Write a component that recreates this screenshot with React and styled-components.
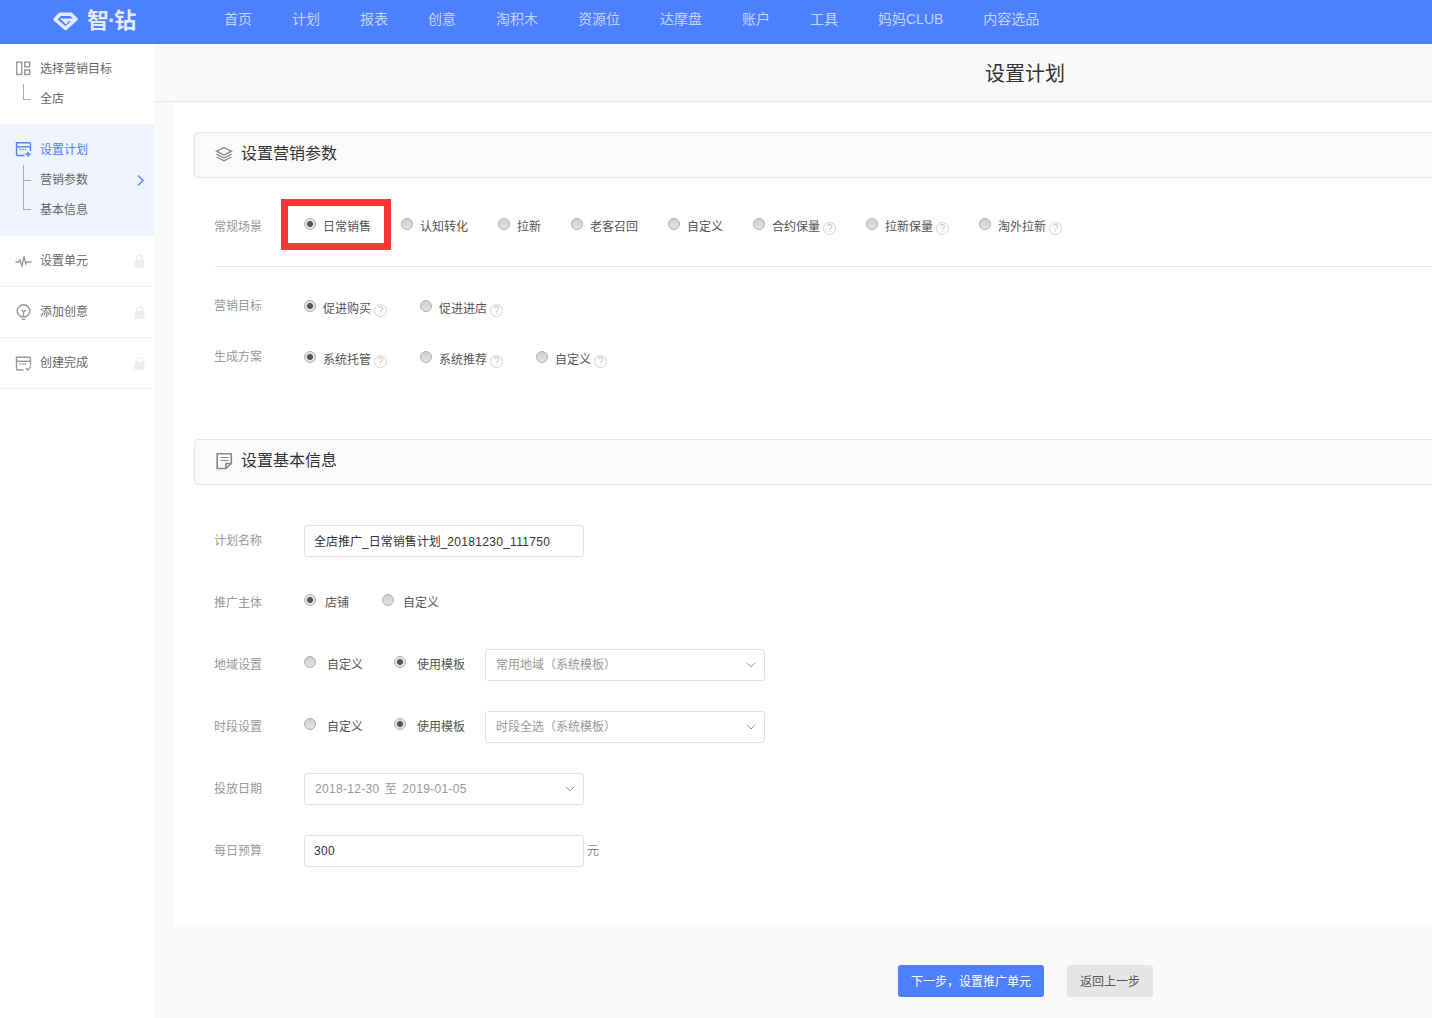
import React from 'react'
import styled, { createGlobalStyle } from 'styled-components'

const Global = createGlobalStyle`
  html, body {
    margin: 0;
    padding: 0;
    overflow: hidden;
    background: #f9f9f9;
    font-family: "Liberation Sans", "Noto Sans CJK SC", sans-serif;
    font-size: 12px;
    color: #333;
  }
  * { box-sizing: border-box; }
`

const Page = styled.div`
  width: 1432px;
  height: 1018px;
  overflow: hidden;
  display: flex;
  flex-direction: column;
`

const Header = styled.header`
  height: 44px;
  flex: none;
  display: flex;
  align-items: center;
  background: #4d80ff;
`

const Logo = styled.div`
  width: 224px;
  height: 44px;
  flex: none;
  display: flex;
  align-items: center;
  padding: 0 0 2px 53px;
  color: #e3ebff;
`

const LogoText = styled.span`
  margin-left: 9px;
  font-size: 22px;
  line-height: 38px;
  font-weight: 700;
  letter-spacing: -1px;
  white-space: nowrap;
`

const Nav = styled.nav`
  display: flex;
  gap: 40px;
  margin-top: -6px;
`

const NavItem = styled.a`
  font-size: 14px;
  line-height: 20px;
  color: rgba(255, 255, 255, 0.68);
  white-space: nowrap;
`

const Body = styled.div`
  flex: 1;
  display: flex;
  min-height: 0;
`

const Sidebar = styled.aside`
  width: 154px;
  flex: none;
  background: #fff;
`

const StepGroup = styled.div`
  padding: ${p => (p.$active ? '10px 0 12px' : '9px 0 11px')};
  background: ${p => (p.$active ? '#f0f4fe' : '#fff')};
`

const StepRow = styled.div`
  height: ${p => (p.$single ? '51px' : '30px')};
  display: flex;
  align-items: center;
  padding: 0 0 ${p => (p.$single ? '4px' : '2px')} 15px;
  color: ${p => (p.$active ? '#4d80ff' : '#666')};
  border-bottom: ${p => (p.$single ? '1px solid #f3f3f3' : 'none')};
  position: relative;
`

const StepIcon = styled.span`
  width: 17px;
  height: 17px;
  flex: none;
  margin: ${p => (p.$single ? '4px' : '3px')} 8px 0 0;
  display: flex;
  color: ${p => (p.$active ? '#4d80ff' : '#999')};
`

const SubRow = styled.div`
  height: 30px;
  display: flex;
  align-items: center;
  padding: 0 0 2px 40px;
  color: #666;
  position: relative;

  &::before {
    content: '';
    position: absolute;
    left: 23px;
    top: ${p => (p.$first ? '1px' : '-15px')};
    width: 7px;
    height: ${p => (p.$first ? '15px' : '30px')};
    border-left: 1px solid #aaa;
    border-bottom: 1px solid #aaa;
  }
`

const Arrow = styled.span`
  position: absolute;
  right: 9px;
  top: 10px;
  display: flex;
  color: #4d80ff;
`

const LockMark = styled.span`
  position: absolute;
  right: 9px;
  top: 19px;
  display: flex;
  color: #eeeeee;
`

const Main = styled.main`
  flex: 1;
  min-width: 0;
  display: flex;
  flex-direction: column;
  background: #f9f9f9;
`

const TitleBand = styled.div`
  height: 58px;
  flex: none;
  padding-left: 831px;
  font-size: 20px;
  line-height: 60px;
  color: #333;
  border-bottom: 1px solid #e6e6e6;
`

const Panel = styled.section`
  flex: 1;
  margin-left: 20px;
  padding: 30px 0 58px 20px;
  background: #fff;
`

const SectionHeader = styled.div`
  height: 46px;
  margin-right: -10px;
  margin-top: ${p => p.$top || 0}px;
  display: flex;
  align-items: center;
  padding: 0 0 2px 20px;
  background: #fafafa;
  border: 1px solid #e6e6e6;
  border-radius: 4px;
  font-size: 16px;
  color: #333;
`

const SectionIcon = styled.span`
  width: 18px;
  height: 18px;
  margin-right: 8px;
  display: flex;
  color: #888;
`

const SectionTitle = styled.span`
  margin-top: -4px;
`

const Form = styled.div`
  padding-left: 20px;
`

const OptionRow = styled.div`
  display: flex;
  align-items: flex-start;
  margin-top: ${p => p.$top}px;
`

const Label = styled.div`
  width: 90px;
  flex: none;
  line-height: 20px;
  margin-top: ${p => p.$shift || 0}px;
  color: #999;
`

const Options = styled.div`
  display: flex;
  gap: ${p => p.$gap || 30}px;
`

const Option = styled.label`
  display: flex;
  align-items: flex-start;
  padding-top: 1px;
  line-height: 20px;
  color: #555;
  white-space: nowrap;
  position: relative;
`

const Radio = styled.span`
  width: 12px;
  height: 12px;
  flex: none;
  margin: 1px ${p => p.$space || 7}px 0 0;
  border-radius: 50%;
  border: 1px solid #aeaeae;
  background: ${p =>
    p.$checked
      ? 'radial-gradient(circle, #555 0 2.6px, #e4e4e4 3.4px)'
      : 'linear-gradient(#cecece, #e4e4e4)'};
`

const Help = styled.span`
  width: 13px;
  height: 13px;
  margin: 5px 0 0 3px;
  border-radius: 50%;
  border: 1px solid #d2d2d2;
  color: #c4c4c4;
  font-size: 10px;
  line-height: 11px;
  text-align: center;
`

const Highlight = styled.span`
  position: absolute;
  left: -23px;
  top: -17px;
  width: 110px;
  height: 51px;
  border: 7px solid #ff3636;
`

const Divider = styled.div`
  height: 1px;
  margin-top: 29px;
  background: #e6e6e6;
`

const Field = styled.div`
  display: flex;
  align-items: center;
  height: 32px;
  margin-top: ${p => p.$top}px;
`

const FieldOptions = styled(Options)`
  align-self: flex-start;
  padding-top: 5px;
  margin-right: 20px;
`

const TextBox = styled.div`
  width: 280px;
  height: 32px;
  flex: none;
  display: flex;
  align-items: center;
  padding: 0 9px ${p => p.$lift || 0}px ${p => (p.$select ? '10px' : '9px')};
  border: 1px solid #e1e1e1;
  border-radius: 3px;
  background: #fff;
  color: ${p => (p.$select ? '#999' : '#333')};
  letter-spacing: ${p => p.$spacing || 0};
  white-space: pre;
  position: relative;
`

const Digits = styled.span`
  letter-spacing: 0.3px;
`

const DateText = styled.span`
  word-spacing: -1px;
`

const Caret = styled.span`
  position: absolute;
  right: 8px;
  top: 12px;
  display: flex;
`

const Unit = styled.span`
  margin: 0 0 4px 3px;
  color: #888;
`

const Footer = styled.footer`
  height: 93px;
  flex: none;
  display: flex;
  align-items: flex-start;
  gap: 23px;
  padding: 40px 0 0 744px;
`

const Button = styled.button`
  height: 32px;
  width: ${p => p.$width}px;
  padding: 0 0 2px;
  border: none;
  border-radius: 3px;
  font: inherit;
  background: ${p => (p.$primary ? '#4d80ff' : '#e5e5e5')};
  color: ${p => (p.$primary ? '#fff' : '#555')};
`

const Svg = ({ size = 17, children }) => (
  <svg width={size} height={size} viewBox="0 0 17 17" fill="none" stroke="currentColor" strokeWidth="1.4">
    {children}
  </svg>
)

const GoalIcon = () => (
  <Svg>
    <rect x="1.700" y="2.200" width="5" height="12.300" />
    <rect x="9.700" y="2.200" width="5" height="4.600" />
    <rect x="9.700" y="9.900" width="5" height="4.600" />
  </Svg>
)

const PlanIcon = () => (
  <Svg>
    <path d="M9.500 14.500H2.700a1.200 1.200 0 0 1-1.200-1.200V1.800h12.800a1.200 1.200 0 0 1 1.200 1.200v7" />
    <path d="M1.500 5.800h14.500" />
    <path d="M4.500 8.500h7" strokeDasharray="1.400 1.200" />
    <path d="M13 10.800v5M10.500 13.300h5" />
  </Svg>
)

const PulseIcon = () => (
  <Svg>
    <path d="M0.500 9h3l1.500-2 2 6 2-10 1.800 8 1-2h4.700" strokeWidth="1.300" />
  </Svg>
)

const BulbIcon = () => (
  <Svg>
    <path d="M5.800 12.700C4 11.500 2.200 9.700 2.200 7.100a6.300 6.300 0 0 1 12.600 0c0 2.600-1.800 4.400-3.600 5.600z" />
    <path d="M8.500 12.500V7.500M6.400 6l2.100 2 2.100-2" />
    <path d="M6.800 15.300h3.400" />
  </Svg>
)

const DoneIcon = () => (
  <Svg>
    <path d="M8.500 15H2.700a1.200 1.200 0 0 1-1.200-1.200V2.300h12.800a1.200 1.200 0 0 1 1.200 1.200v7" />
    <path d="M1.500 6.300h14.500" />
    <path d="M4.500 9h7" strokeDasharray="1.400 1.200" />
    <path d="M10.800 13.200l1.900 1.800 3.200-3.400" />
  </Svg>
)

const LayersIcon = () => (
  <svg width="18" height="18" viewBox="0 0 18 18" fill="none" stroke="currentColor" strokeWidth="1.300">
    <path d="M9 2.500l7.500 3.700L9 10 1.500 6.200z" />
    <path d="M1.500 9.200L9 13l7.500-3.800" />
    <path d="M1.500 12L9 15.800l7.500-3.800" />
  </svg>
)

const NoteIcon = () => (
  <svg width="18" height="18" viewBox="0 0 18 18" fill="none" stroke="currentColor" strokeWidth="1.600">
    <path d="M11 16.500H2.200V1.700h14.100V11.500z" />
    <path d="M11 16.500v-5h5.300" />
    <path d="M5.500 5.500h8M5.500 8.500h8" strokeWidth="1.200" />
  </svg>
)

const LockIcon = () => (
  <svg width="11" height="13" viewBox="0 0 11 13">
    <path d="M2.500 5.500V3.500a3 3 0 0 1 6 0v2" fill="none" stroke="currentColor" strokeWidth="1.300" />
    <rect x="0.500" y="5" width="10" height="8" rx="1.200" fill="currentColor" />
  </svg>
)

const ChevronRight = () => (
  <svg width="9" height="13" viewBox="0 0 9 13" fill="none" stroke="currentColor" strokeWidth="1.300">
    <path d="M2 1.500L7 6.500 2 11.500" />
  </svg>
)

const ChevronDown = () => (
  <svg width="10" height="6" viewBox="0 0 10 6" fill="none" stroke="#999" strokeWidth="1">
    <path d="M0.800 0.800L5 5l4.200-4.200" />
  </svg>
)

const LogoMark = () => (
  <svg width="25" height="18" viewBox="0 0 25 18" fill="none" stroke="currentColor">
    <path d="M7 2.200h11l5 5-10.500 9.300L2.200 7.500z" strokeWidth="3.600" strokeLinejoin="round" />
    <path d="M20 8H10.500l3.500 3.500" strokeWidth="3" />
  </svg>
)

const navItems = ['首页', '计划', '报表', '创意', '淘积木', '资源位', '达摩盘', '账户', '工具', '妈妈CLUB', '内容选品']

const Choice = ({ text, checked, help, mark, space }) => (
  <Option>
    {mark && <Highlight />}
    <Radio $checked={checked} $space={space} />
    {text}
    {help && <Help>?</Help>}
  </Option>
)

const Select = ({ children, spacing }) => (
  <TextBox $select $lift={4} $spacing={spacing}>
    {children}
    <Caret><ChevronDown /></Caret>
  </TextBox>
)

export default function App() {
  return (
    <Page>
      <Global />
      <Header>
        <Logo>
          <LogoMark />
          <LogoText>智·钻</LogoText>
        </Logo>
        <Nav>
          {navItems.map(item => (
            <NavItem key={item}>{item}</NavItem>
          ))}
        </Nav>
      </Header>
      <Body>
        <Sidebar>
          <StepGroup>
            <StepRow>
              <StepIcon><GoalIcon /></StepIcon>
              选择营销目标
            </StepRow>
            <SubRow $first>全店</SubRow>
          </StepGroup>
          <StepGroup $active>
            <StepRow $active>
              <StepIcon $active><PlanIcon /></StepIcon>
              设置计划
            </StepRow>
            <SubRow $first>
              营销参数
              <Arrow><ChevronRight /></Arrow>
            </SubRow>
            <SubRow>基本信息</SubRow>
          </StepGroup>
          <StepRow $single>
            <StepIcon $single><PulseIcon /></StepIcon>
            设置单元
            <LockMark><LockIcon /></LockMark>
          </StepRow>
          <StepRow $single>
            <StepIcon $single><BulbIcon /></StepIcon>
            添加创意
            <LockMark><LockIcon /></LockMark>
          </StepRow>
          <StepRow $single>
            <StepIcon $single><DoneIcon /></StepIcon>
            创建完成
            <LockMark><LockIcon /></LockMark>
          </StepRow>
        </Sidebar>
        <Main>
          <TitleBand>设置计划</TitleBand>
          <Panel>
            <SectionHeader>
              <SectionIcon><LayersIcon /></SectionIcon>
              <SectionTitle>设置营销参数</SectionTitle>
            </SectionHeader>
            <Form>
              <OptionRow $top={38}>
                <Label $shift={1}>常规场景</Label>
                <Options>
                  <Choice text="日常销售" checked mark />
                  <Choice text="认知转化" />
                  <Choice text="拉新" />
                  <Choice text="老客召回" />
                  <Choice text="自定义" />
                  <Choice text="合约保量" help />
                  <Choice text="拉新保量" help />
                  <Choice text="淘外拉新" help />
                </Options>
              </OptionRow>
              <Divider />
              <OptionRow $top={31}>
                <Label $shift={-2}>营销目标</Label>
                <Options $gap={33}>
                  <Choice text="促进购买" checked help />
                  <Choice text="促进进店" help />
                </Options>
              </OptionRow>
              <OptionRow $top={30}>
                <Label $shift={-2}>生成方案</Label>
                <Options $gap={33}>
                  <Choice text="系统托管" checked help />
                  <Choice text="系统推荐" help />
                  <Choice text="自定义" help />
                </Options>
              </OptionRow>
            </Form>
            <SectionHeader $top={69}>
              <SectionIcon><NoteIcon /></SectionIcon>
              <SectionTitle>设置基本信息</SectionTitle>
            </SectionHeader>
            <Form>
              <Field $top={40}>
                <Label>计划名称</Label>
                <TextBox $lift={2}>
                  <span>全店推广_日常销售计划_<Digits>20181230_111750</Digits></span>
                </TextBox>
              </Field>
              <OptionRow $top={35}>
                <Label $shift={1}>推广主体</Label>
                <Options $gap={33}>
                  <Choice text="店铺" checked space={9} />
                  <Choice text="自定义" space={9} />
                </Options>
              </OptionRow>
              <Field $top={36}>
                <Label>地域设置</Label>
                <FieldOptions $gap={31}>
                  <Choice text="自定义" space={11} />
                  <Choice text="使用模板" checked space={11} />
                </FieldOptions>
                <Select>常用地域（系统模板）</Select>
              </Field>
              <Field $top={30}>
                <Label>时段设置</Label>
                <FieldOptions $gap={31}>
                  <Choice text="自定义" space={11} />
                  <Choice text="使用模板" checked space={11} />
                </FieldOptions>
                <Select>时段全选（系统模板）</Select>
              </Field>
              <Field $top={30}>
                <Label>投放日期</Label>
                <Select spacing="0.3px"><DateText>2018-12-30  至  2019-01-05</DateText></Select>
              </Field>
              <Field $top={30}>
                <Label>每日预算</Label>
                <TextBox $spacing="0.3px">300</TextBox>
                <Unit>元</Unit>
              </Field>
            </Form>
          </Panel>
          <Footer>
            <Button $primary $width={146}>下一步，设置推广单元</Button>
            <Button $width={86}>返回上一步</Button>
          </Footer>
        </Main>
      </Body>
    </Page>
  )
}
